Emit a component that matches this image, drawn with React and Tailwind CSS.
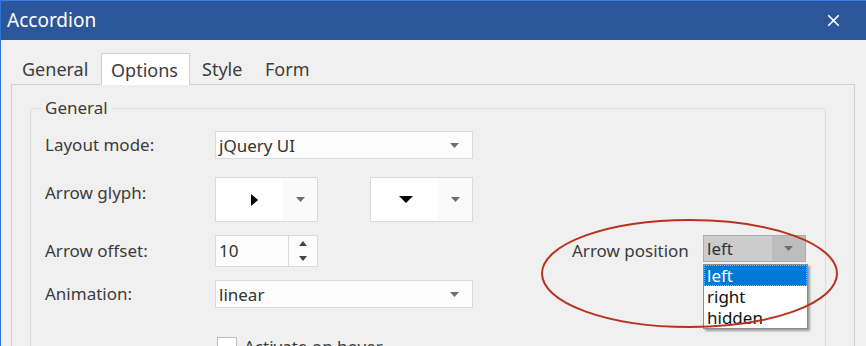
import { X } from 'lucide-react'

function Caret({ className = '' }) {
  return (
    <svg width="9" height="5" viewBox="0 0 9 5" className={className}>
      <path d="M0 0 H9 L4.5 5 Z" fill="#6f6f6f" />
    </svg>
  )
}

function Select({ value, width }) {
  return (
    <div
      className="flex h-[28px] items-center justify-between border border-[#dadada] bg-[#fcfcfc] pl-[3px] pr-[13px]"
      style={{ width }}
    >
      <span className="text-[17px] leading-none text-[#333]">{value}</span>
      <Caret />
    </div>
  )
}

function GlyphBox({ children }) {
  return (
    <div className="flex h-[45px] w-[103px] border border-[#dadada] bg-white">
      <div className="relative flex-1">{children}</div>
      <div className="flex w-[34px] items-center justify-center bg-[#fafafa]">
        <Caret />
      </div>
    </div>
  )
}

export default function App() {
  return (
    <div className="relative h-[346px] w-[866px] overflow-hidden border-l border-[#2f74d8] bg-[#f0f0f0] font-['Noto_Sans',sans-serif] text-[#3c3c3c]">
      {/* Title bar */}
      <div className="flex h-[40px] items-center justify-between border-t border-[#3c7fe0] bg-[#2b579a] pl-[6px] pr-[23px]">
        <span className="text-[19px] text-white">Accordion</span>
        <X size={19} strokeWidth={2.2} color="#ffffff" />
      </div>

      <div className="pl-[10px] pt-[13px]">
        {/* Tabs */}
        <div className="flex h-[31px] items-end text-[18px] leading-none">
          <div className="flex h-[31px] w-[90px] items-center pl-[11px]">General</div>
          <div className="relative z-10 mb-[-1px] flex h-[32px] w-[89px] items-center border border-b-0 border-[#d0d0d0] bg-white pl-[9px]">
            Options
          </div>
          <div className="flex h-[31px] w-[64px] items-center pl-[12px]">Style</div>
          <div className="flex h-[31px] w-[70px] items-center pl-[11px]">Form</div>
        </div>

        {/* Panel */}
        <div className="h-[300px] w-[844px] border border-[#d0d0d0] pl-[18px]">
          <fieldset className="mt-[12px] h-[280px] w-[796px] rounded-[3px] border border-[#dcdcdc]">
            <legend className="ml-[11px] px-[3px] text-[17px] leading-[22px]">General</legend>

            <div className="pl-[14px] text-[17px]">
              {/* Layout mode */}
              <div className="mt-[12px] flex h-[28px] items-center">
                <div className="w-[170px]">Layout mode:</div>
                <Select value="jQuery UI" width={258} />
              </div>

              {/* Arrow glyph */}
              <div className="mt-[18px] flex items-start">
                <div className="mt-[3px] w-[170px]">Arrow glyph:</div>
                <GlyphBox>
                  <svg width="7" height="12" viewBox="0 0 7 12" className="absolute left-[35px] top-[16px]">
                    <path d="M0 0 L7 6 L0 12 Z" fill="#000" />
                  </svg>
                </GlyphBox>
                <div className="ml-[52px]">
                  <GlyphBox>
                    <svg width="14" height="7" viewBox="0 0 14 7" className="absolute left-[28px] top-[18px]">
                      <path d="M0 0 H14 L7 7 Z" fill="#000" />
                    </svg>
                  </GlyphBox>
                </div>
              </div>

              {/* Arrow offset + Arrow position */}
              <div className="mt-[13px] flex h-[32px] items-center">
                <div className="w-[170px]">Arrow offset:</div>
                <div className="flex h-[32px] border border-[#dadada] bg-[#fcfcfc]">
                  <div className="flex w-[72px] items-center pl-[3px] text-[#333]">10</div>
                  <div className="flex w-[29px] flex-col items-center justify-center gap-[10px] border-l border-[#dadada]">
                    <svg width="8" height="5" viewBox="0 0 8 5">
                      <path d="M0 5 H8 L4 0 Z" fill="#444" />
                    </svg>
                    <svg width="8" height="5" viewBox="0 0 8 5">
                      <path d="M0 0 H8 L4 5 Z" fill="#444" />
                    </svg>
                  </div>
                </div>

                <div className="ml-[254px] flex items-center self-stretch">
                  <div className="w-[131px]">Arrow position</div>
                  <div className="relative self-start">
                    <div className="flex h-[27px] w-[103px] border border-[#adadad] bg-[#cccccc]">
                      <div className="flex flex-1 items-center pl-[3px] text-[#333]">left</div>
                      <div className="flex w-[33px] items-center justify-center bg-[#bdbdbd]">
                        <Caret />
                      </div>
                    </div>
                    {/* Open list */}
                    <div className="absolute left-0 top-[29px] z-20 w-[105px] border border-[#8c8c8c] bg-white text-[17px] leading-[21px] text-[#111] shadow-[2px_2px_2px_rgba(0,0,0,0.35)]">
                      <div className="border border-dotted border-[#e3a060] bg-[#0078d7] pl-[2px] leading-[19px] text-white">left</div>
                      <div className="pl-[3px]">right</div>
                      <div className="pl-[3px]">hidden</div>
                    </div>
                  </div>
                </div>
              </div>

              {/* Animation */}
              <div className="mt-[13px] flex h-[28px] items-center">
                <div className="w-[170px]">Animation:</div>
                <Select value="linear" width={258} />
              </div>

              {/* Activate on hover */}
              <div className="mt-[26px] flex items-center pl-[172px]">
                <div className="h-[20px] w-[20px] border border-[#bdbdbd] bg-white" />
                <span className="ml-[7px]">Activate on hover</span>
              </div>
            </div>
          </fieldset>
        </div>
      </div>

      {/* Red highlight ellipse */}
      <svg width="302" height="114" viewBox="0 0 302 114" className="pointer-events-none absolute left-[538px] top-[217px] z-30">
        <ellipse cx="150.5" cy="56.5" rx="147.5" ry="53.5" fill="none" stroke="#b8321f" strokeWidth="2" />
      </svg>
    </div>
  )
}
